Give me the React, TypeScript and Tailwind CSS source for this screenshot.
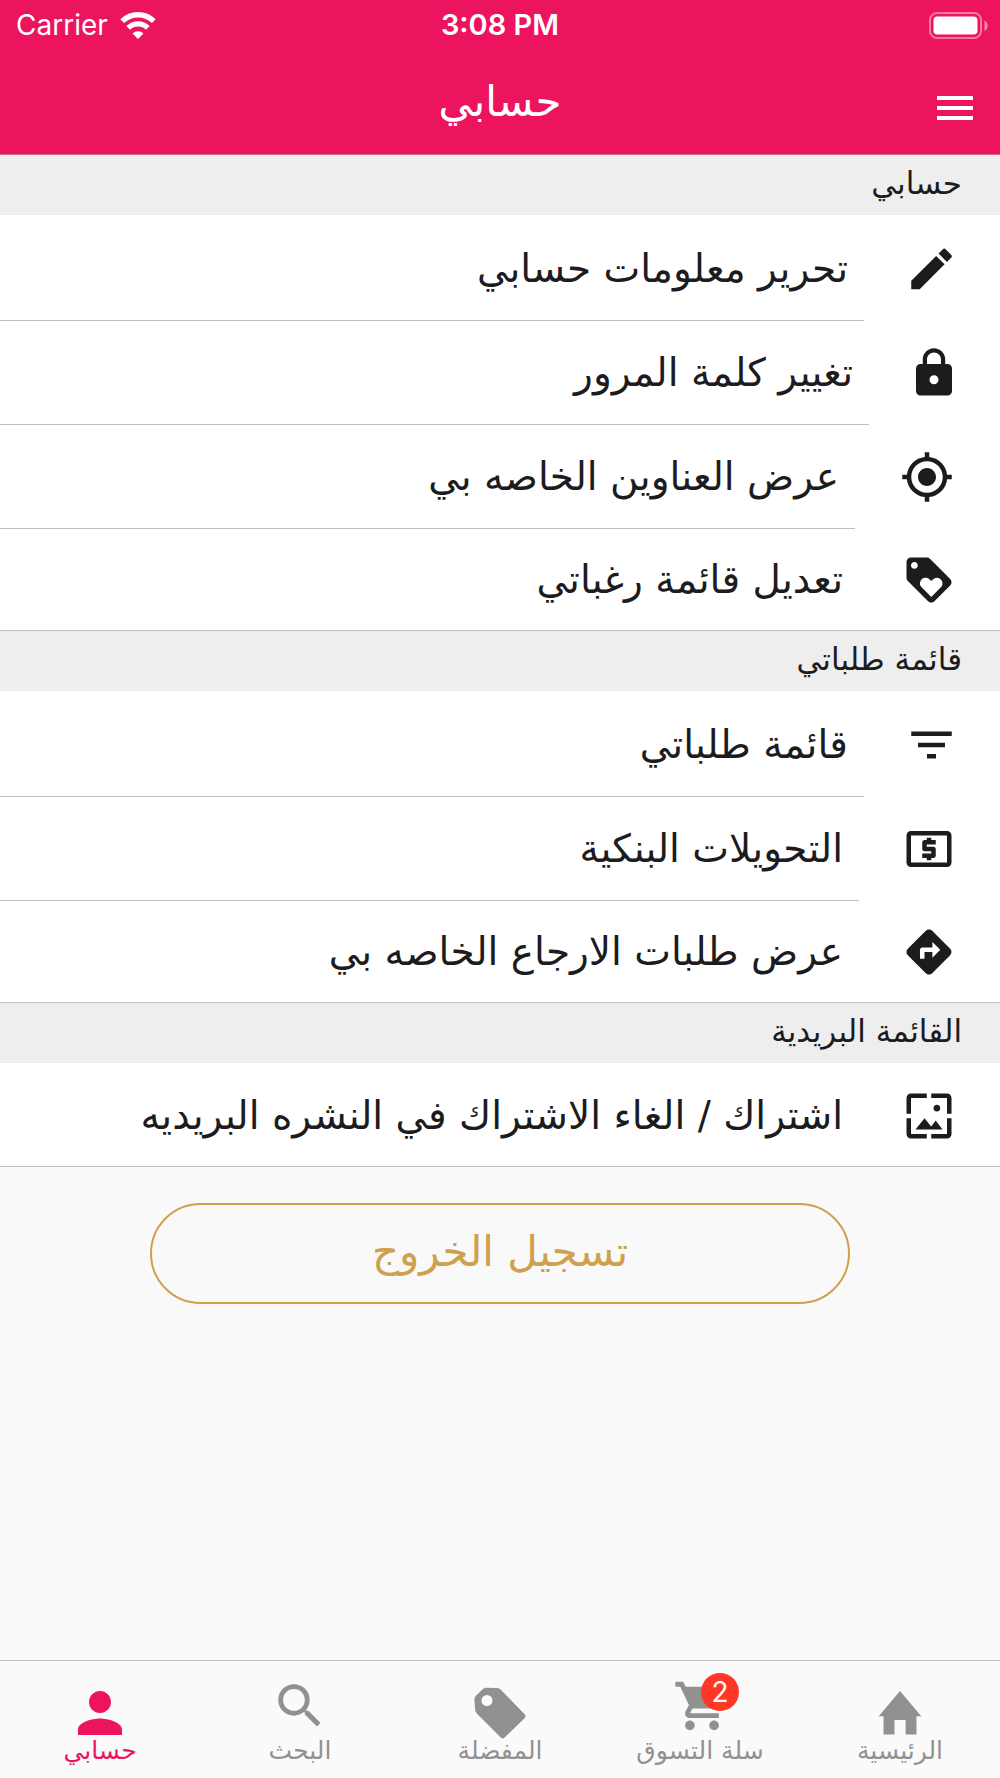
import type { ReactNode } from "react";
import type { IconType } from "react-icons";
import {
  MdDirections,
  MdEdit,
  MdFilterList,
  MdGpsFixed,
  MdLocalAtm,
  MdLock,
  MdLoyalty,
  MdMenu,
  MdPerson,
  MdSearch,
  MdShoppingCart,
  MdWallpaper,
} from "react-icons/md";

type Row = { label: string; Icon: IconType; viewBox: string; width: string };
type Section = { title: string; rows: Row[] };

const sections: Section[] = [
  {
    title: "حسابي",
    rows: [
      { label: "تحرير معلومات حسابي", Icon: MdEdit, viewBox: "3 0 18 24", width: "w-[41px]" },
      { label: "تغيير كلمة المرور", Icon: MdLock, viewBox: "4 0 16 24", width: "w-9" },
      { label: "عرض العناوين الخاصه بي", Icon: MdGpsFixed, viewBox: "1 0 22 24", width: "w-[50px]" },
      { label: "تعديل قائمة رغباتي", Icon: MdLoyalty, viewBox: "2 0 20 24", width: "w-[46px]" },
    ],
  },
  {
    title: "قائمة طلباتي",
    rows: [
      { label: "قائمة طلباتي", Icon: MdFilterList, viewBox: "3 0 18 24", width: "w-[41px]" },
      { label: "التحويلات البنكية", Icon: MdLocalAtm, viewBox: "2 0 20 24", width: "w-[46px]" },
      { label: "عرض طلبات الارجاع الخاصه بي", Icon: MdDirections, viewBox: "2 0 20 24", width: "w-[46px]" },
    ],
  },
  {
    title: "القائمة البريدية",
    rows: [
      {
        label: "اشتراك / الغاء الاشتراك في النشره البريديه",
        Icon: MdWallpaper,
        viewBox: "2 0 20 24",
        width: "w-[46px]",
      },
    ],
  },
];

function WifiIcon() {
  return (
    <svg viewBox="0 0 36 27" className="h-[27px] w-9" fill="none" aria-hidden="true">
      <path d="M2.2 9.2a22.5 22.5 0 0 1 31.6 0" stroke="#fff" strokeWidth="5.4" />
      <path d="M8.2 15.9a13.8 13.8 0 0 1 19.6 0" stroke="#fff" strokeWidth="5.2" />
      <path d="M18 27l-5.5-5.4a7.8 7.8 0 0 1 11 0z" fill="#fff" />
    </svg>
  );
}

function BatteryIcon() {
  return (
    <svg viewBox="0 0 59 27" className="h-[27px] w-[59px]" aria-hidden="true">
      <rect x="1" y="1" width="51" height="25" rx="7" fill="none" stroke="#fff" strokeOpacity=".42" strokeWidth="2" />
      <rect x="4.5" y="4.5" width="44" height="18" rx="4" fill="#fff" />
      <path d="M55.5 8.5c4.2 2 4.2 8.5 0 10.5z" fill="#fff" fillOpacity=".5" />
    </svg>
  );
}

function TagIcon() {
  return (
    <svg viewBox="0 0 52 52" className="size-[52px]" fill="currentColor" aria-hidden="true">
      <path
        fillRule="evenodd"
        d="M.4 12.5q-.1-2 1.300-3.400l6.700-6.600Q10 .7 12 .7l11 .3q2.300.1 3.900 1.700L50.800 27.500q1.600 1.700 0 3.400L30.400 50.800q-1.700 1.600-3.400 0L3 26.800q-1.700-1.700-1.800-4zM13 8a5.500 5.500 0 1 0 0 11 5.500 5.500 0 0 0 0-11z"
      />
    </svg>
  );
}

function HomeIcon() {
  return (
    <svg viewBox="0 0 44 44" className="size-11" fill="currentColor" aria-hidden="true">
      <path d="M22 0l21.300 25.300h-4.800V43.500H27.600V29H16.500v14.500H5.500V25.300H.7z" />
    </svg>
  );
}

function Tab({ label, active, children }: { label: string; active?: boolean; children: ReactNode }) {
  return (
    <a
      href="#"
      aria-current={active ? "page" : undefined}
      className={
        "flex flex-1 flex-col items-center text-[25px] leading-8 " + (active ? "text-[#ec135f]" : "text-[#919191]")
      }
    >
      <span className="flex h-[74px] items-end justify-center">{children}</span>
      <span className="whitespace-nowrap">{label}</span>
    </a>
  );
}

export default function App() {
  return (
    <div
      dir="rtl"
      className="flex min-h-screen flex-col bg-[#f9f9f9] font-['DejaVu_Sans',sans-serif] text-[#1c1c1e]"
    >
      <header className="border-b border-[#d4668c] bg-[#ec135f] text-white">
        <div dir="ltr" className="grid h-[50px] grid-cols-3 items-center px-3 font-['Inter',sans-serif] text-[28px]">
          <div className="flex items-center gap-3 pl-1">
            <span>Carrier</span>
            <WifiIcon />
          </div>
          <span className="text-center text-[29px] font-semibold">3:08 PM</span>
          <div className="flex justify-end">
            <BatteryIcon />
          </div>
        </div>
        <div className="grid h-[104px] grid-cols-[1fr_auto_1fr] items-center px-[21px]">
          <button type="button" aria-label="القائمة" className="mt-3 justify-self-start">
            <MdMenu className="size-12" />
          </button>
          <h1 className="text-[42px] leading-[56px]">حسابي</h1>
        </div>
      </header>

      <main>
        {sections.map((section) => (
          <section key={section.title} className="border-b border-[#bfbfc2] bg-white">
            <h2 className="h-[60px] bg-[#eeeeee] px-[38px] text-[31px] leading-[56px]">{section.title}</h2>
            <ul className="pt-0.5">
              {section.rows.map(({ label, Icon, viewBox, width }) => (
                <li key={label} className="group h-[104px] last:h-[101px]">
                  <a href="#" className="flex h-full items-stretch gap-[47px] pr-12">
                    <Icon viewBox={viewBox} className={"h-[54px] shrink-0 self-center " + width} />
                    <span className="flex flex-1 items-center border-b border-[#bfbfc2] pr-4 text-[39px] leading-[52px] whitespace-nowrap group-last:border-b-0">
                      {label}
                    </span>
                  </a>
                </li>
              ))}
            </ul>
          </section>
        ))}
        <div className="px-[15%] py-9">
          <button
            type="button"
            className="h-[101px] w-full rounded-full border-2 border-[#cfa04e] pb-1 text-[42px] text-[#cfa04e]"
          >
            تسجيل الخروج
          </button>
        </div>
      </main>

      <nav className="mt-auto flex h-[118px] border-t border-[#bfbfc2] bg-[#fafafa]">
        <Tab label="الرئيسية">
          <HomeIcon />
        </Tab>
        <Tab label="سلة التسوق">
          <span className="relative ml-1">
            <MdShoppingCart className="size-[58px]" />
            <span className="absolute -top-1 -right-2 flex size-[38px] items-center justify-center rounded-full bg-[#ff3726] font-['Inter',sans-serif] text-[28px] text-white">
              2
            </span>
          </span>
        </Tab>
        <Tab label="المفضلة">
          <span className="-mb-1">
            <TagIcon />
          </span>
        </Tab>
        <Tab label="البحث">
          <MdSearch className="size-[58px]" />
        </Tab>
        <Tab label="حسابي" active>
          <MdPerson viewBox="4 4 16 16" className="size-11" />
        </Tab>
      </nav>
    </div>
  );
}
